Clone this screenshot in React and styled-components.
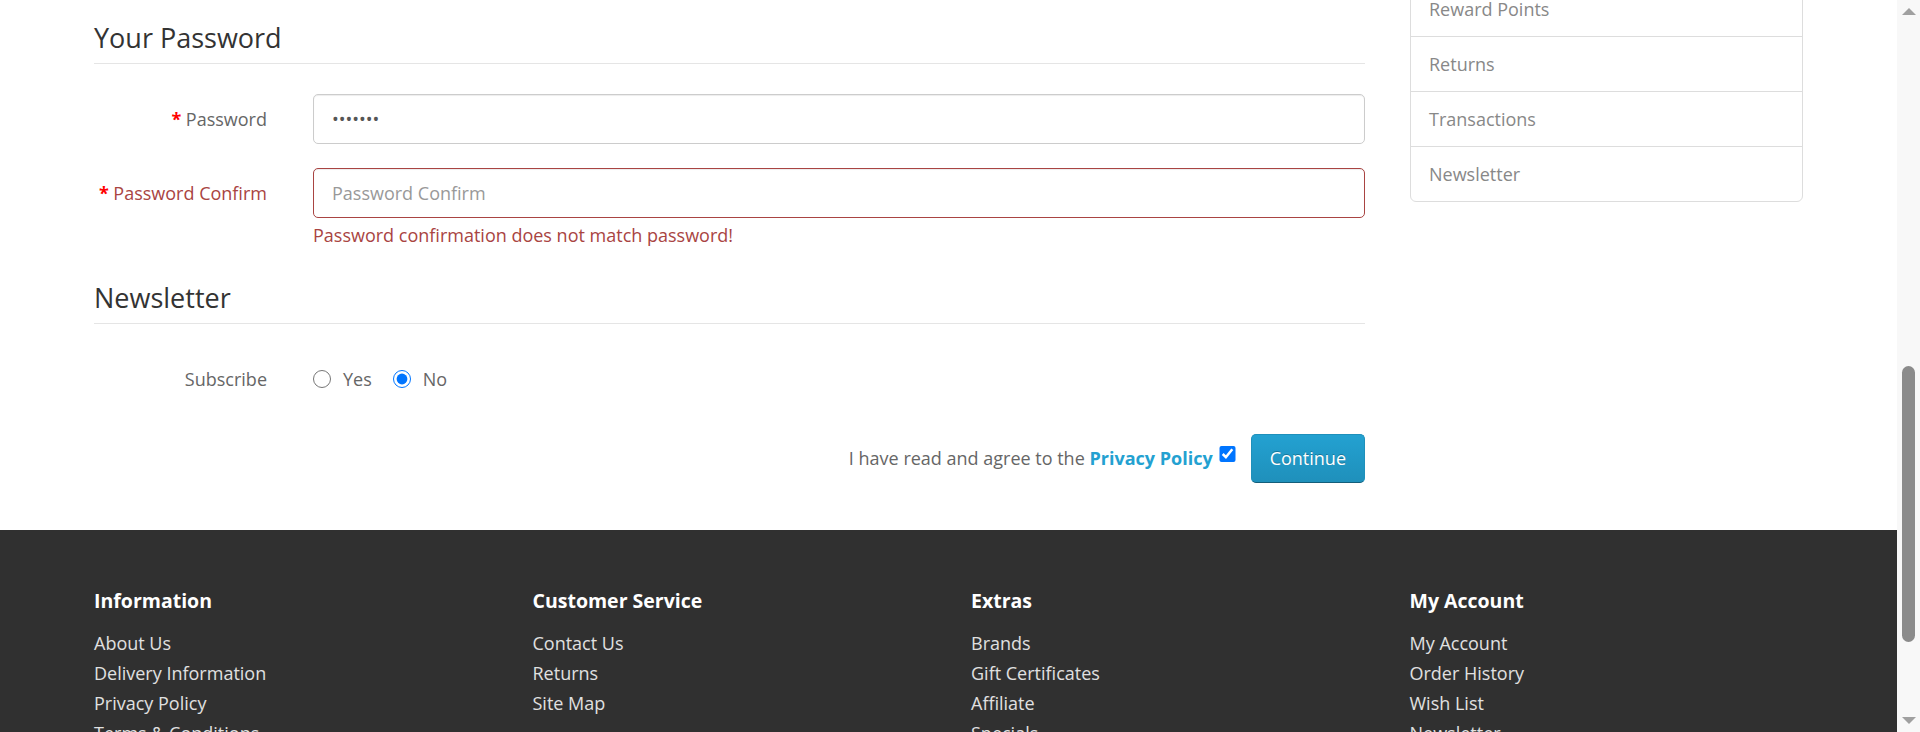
import React, { useLayoutEffect, useRef, useState } from 'react';
import styled, { createGlobalStyle } from 'styled-components';
import { Home, Phone, User, Heart, ShoppingCart, Share, Search } from 'lucide-react';

const GlobalStyle = createGlobalStyle`
	* { box-sizing: border-box; }
	html, body { margin: 0; padding: 0; height: 100%; overflow: hidden; }
	body {
		font-family: 'Open Sans', 'Liberation Sans', sans-serif;
		font-size: 18px;
		color: #666;
		background: #fff;
	}
	#root { height: 100%; }
	a { text-decoration: none; }
`;

const Screen = styled.div`
	display: flex;
	height: 732px;
	overflow: hidden;
	background: #fff;
`;

const Viewport = styled.div`
	position: relative;
	flex: 1;
	height: 100%;
	overflow-y: scroll;
	overflow-x: hidden;
	scrollbar-width: none;

	&::-webkit-scrollbar {
		display: none;
	}
`;

/* drawn window scrollbar */
const ScrollRail = styled.div`
	width: 23px;
	flex: none;
	display: flex;
	flex-direction: column;
	background: #f8f8f8;
`;

const RailArrow = styled.div`
	height: 23px;
	flex: none;
	display: flex;
	align-items: center;
	justify-content: center;

	&::after {
		content: '';
		border-left: 7px solid transparent;
		border-right: 7px solid transparent;
		${(p) => (p.$down ? 'border-top: 7px solid #a0a0a0;' : 'border-bottom: 7px solid #a0a0a0;')}
	}
`;

const RailTrack = styled.div`
	flex: 1;
	padding: 0 5px;
`;

const RailThumb = styled.div`
	width: 13px;
	border-radius: 7px;
	background: #8b8b8b;
`;

const Container = styled.div`
	width: 1709px;
	margin: 0 auto;
`;

/* ---------- header (above the fold) ---------- */

const TopBar = styled.nav`
	height: 50px;
	background: #eee;
	border-bottom: 1px solid #e2e2e2;
	font-size: 14px;
	color: #888;
`;

const TopBarInner = styled(Container)`
	height: 100%;
	display: flex;
	align-items: center;
	justify-content: space-between;
`;

const TopLinks = styled.ul`
	display: flex;
	gap: 18px;
	margin: 0;
	padding: 0;
	list-style: none;

	li {
		display: flex;
		align-items: center;
		gap: 5px;
	}
`;

const SiteHeader = styled.header`
	padding: 40px 0;
`;

const HeaderInner = styled(Container)`
	height: 60px;
	display: grid;
	grid-template-columns: 393px 1fr 393px;
	gap: 45px;
	align-items: center;
`;

const Logo = styled.div`
	font-size: 36px;
	font-weight: 700;
	color: #23a1d1;
`;

const SearchBox = styled.div`
	display: flex;
	height: 50px;
	border: 1px solid #ccc;
	border-radius: 5px;
	overflow: hidden;
`;

const SearchInput = styled.input`
	flex: 1;
	border: 0;
	padding: 0 18px;
	font: inherit;
	color: #555;
	&::placeholder { color: #999; }
`;

const SearchButton = styled.button`
	width: 60px;
	border: 0;
	border-left: 1px solid #ccc;
	background: #eee;
	display: flex;
	align-items: center;
	justify-content: center;
	color: #666;
`;

const CartButton = styled.button`
	height: 50px;
	border: 0;
	border-radius: 5px;
	background: #363636;
	color: #fff;
	font: inherit;
	font-size: 16px;
	display: flex;
	align-items: center;
	justify-content: center;
	gap: 8px;
`;

const Menu = styled(Container)`
	height: 60px;
	margin-bottom: 40px;
	display: flex;
	align-items: center;
	gap: 30px;
	padding: 0 18px;
	border-radius: 5px;
	background: linear-gradient(to bottom, #23a1d1, #1f90bb);
	color: #fff;
	font-size: 17px;
`;

const Breadcrumb = styled(Container)`
	display: flex;
	align-items: center;
	gap: 12px;
	margin-bottom: 50px;
	padding: 13px 18px;
	line-height: 28px;
	border: 1px solid #ddd;
	border-radius: 5px;
	background: #f5f5f5;
	color: #23a1d1;

	span { color: #ccc; }
`;

/* ---------- main area ---------- */

const Row = styled(Container)`
	display: grid;
	grid-template-columns: 1271px 393px;
	column-gap: 45px;
	align-items: start;
`;

const Content = styled.div``;

const PageTitle = styled.h1`
	margin: 25px 0 18px;
	font-size: 33px;
	font-weight: 400;
	line-height: 45px;
	color: #444;
`;

const Intro = styled.p`
	margin: 0 0 40px;
	line-height: 27px;

	a { color: #23a1d1; }
`;

const Fieldset = styled.div`
	padding-bottom: 5px;
`;

const Legend = styled.h2`
	margin: 0 0 30px;
	padding-bottom: 5px;
	border-bottom: 1px solid #e5e5e5;
	font-size: 27px;
	font-weight: 400;
	line-height: 40px;
	color: #333;
`;

const FormRow = styled.div`
	display: grid;
	grid-template-columns: 173px 1fr;
	column-gap: 46px;
	margin-bottom: 24px;
`;

const Label = styled.label`
	text-align: right;
	line-height: 50px;
	white-space: nowrap;
	color: ${(p) => (p.$error ? '#a94442' : '#666')};

	${(p) =>
		p.$required &&
		`&::before {
			content: '* ';
			color: #f00;
			font-weight: 700;
		}`}
`;

const TextInput = styled.input`
	display: block;
	width: 100%;
	height: 50px;
	padding: 0 18px;
	border: 1px solid ${(p) => (p.$error ? '#a94442' : '#ccc')};
	border-radius: 5px;
	box-shadow: inset 0 1px 1px rgba(0, 0, 0, 0.075);
	font: inherit;
	color: #555;
	background: #fff;
	outline: none;

	&::placeholder { color: #999; }
`;

const Feedback = styled.div`
	margin-top: 4px;
	line-height: 27px;
	color: #a94442;
`;

const RadioGroup = styled.div`
	display: flex;
	align-items: center;
	height: 50px;
	gap: 21px;
`;

const RadioLabel = styled.label`
	display: flex;
	align-items: center;
	gap: 12px;
	line-height: 27px;

	input {
		width: 18px;
		height: 18px;
		margin: 0;
	}
`;

const Actions = styled.div`
	display: flex;
	justify-content: flex-end;
	align-items: center;
	margin-top: 1px;
	padding-bottom: 47px;
	line-height: 27px;

	a {
		color: #23a1d1;
		font-weight: 700;
	}
`;

const AgreeBox = styled.input`
	width: 17px;
	height: 16px;
	margin: 0 0 10px 6px;
`;

const PrimaryButton = styled.button`
	height: 49px;
	margin-left: 15px;
	padding: 0 18px;
	border: 1px solid #1f90bb;
	border-bottom-color: #145e7a;
	border-radius: 5px;
	background-color: #229ac8;
	background-image: linear-gradient(to bottom, #23a1d1, #1f90bb);
	color: #fff;
	font: inherit;
	text-shadow: 0 -1px 0 rgba(0, 0, 0, 0.25);
	cursor: pointer;
`;

/* ---------- sidebar ---------- */

const ListGroup = styled.div`
	border: 1px solid #ddd;
	border-radius: 6px;
	overflow: hidden;
`;

const ListItem = styled.a`
	display: block;
	padding: 13px 18px;
	line-height: 28px;
	color: #888;

	& + & {
		border-top: 1px solid #ddd;
	}
`;

/* ---------- footer ---------- */

const Footer = styled.footer`
	padding: 59px 0 80px;
	background: #303030;
	color: #ddd;
`;

const FooterGrid = styled(Container)`
	display: grid;
	grid-template-columns: repeat(4, 1fr);
	column-gap: 45px;
`;

const FooterTitle = styled.h5`
	margin: 0 0 15px;
	font-size: 19.5px;
	font-weight: 700;
	line-height: 24px;
	color: #fff;
`;

const FooterList = styled.ul`
	margin: 0;
	padding: 0;
	list-style: none;

	li { line-height: 30px; }
	a { color: #e0e0e0; }
`;

const FooterRule = styled(Container)`
	margin: 27px auto;
	border-top: 1px solid #515151;
`;

const Copyright = styled(Container)`
	line-height: 27px;
	color: #ccc;
`;

const accountLinks = [
	'Login',
	'Register',
	'Forgotten Password',
	'My Account',
	'Address Book',
	'Wish List',
	'Order History',
	'Downloads',
	'Recurring payments',
	'Reward Points',
	'Returns',
	'Transactions',
	'Newsletter'
];

const footerColumns = [
	{ title: 'Information', links: ['About Us', 'Delivery Information', 'Privacy Policy', 'Terms & Conditions'] },
	{ title: 'Customer Service', links: ['Contact Us', 'Returns', 'Site Map'] },
	{ title: 'Extras', links: ['Brands', 'Gift Certificates', 'Affiliate', 'Specials'] },
	{ title: 'My Account', links: ['My Account', 'Order History', 'Wish List', 'Newsletter'] }
];

const menuItems = ['Desktops', 'Laptops & Notebooks', 'Components', 'Tablets', 'Software', 'Phones & PDAs', 'Cameras', 'MP3 Players'];

const ARROW = 23;

export default function App() {
	const viewportRef = useRef(null);
	const anchorRef = useRef(null);
	const [thumb, setThumb] = useState({ top: 343, height: 276 });

	useLayoutEffect(() => {
		const place = () => {
			const v = viewportRef.current;
			if (!v || !anchorRef.current) return;
			// keep the "Your Password" block 18px below the top of the view
			v.scrollTop = anchorRef.current.offsetTop - 18;

			const track = v.clientHeight - ARROW * 2;
			const height = Math.max(20, (track * v.clientHeight) / v.scrollHeight);
			const range = v.scrollHeight - v.clientHeight;
			const top = range > 0 ? (v.scrollTop / range) * (track - height) : 0;
			setThumb({ top, height });
		};
		place();
		if (document.fonts && document.fonts.ready) document.fonts.ready.then(place);
	}, []);

	return (
		<>
			<GlobalStyle />
			<Screen>
				<Viewport ref={viewportRef}>
					<TopBar>
						<TopBarInner>
							<span>$ Currency</span>
							<TopLinks>
								<li><Phone size={14} /> 123456789</li>
								<li><User size={14} /> My Account</li>
								<li><Heart size={14} /> Wish List (0)</li>
								<li><ShoppingCart size={14} /> Shopping Cart</li>
								<li><Share size={14} /> Checkout</li>
							</TopLinks>
						</TopBarInner>
					</TopBar>

					<SiteHeader>
						<HeaderInner>
							<Logo>Your Store</Logo>
							<SearchBox>
								<SearchInput placeholder="Search" />
								<SearchButton><Search size={18} /></SearchButton>
							</SearchBox>
							<CartButton><ShoppingCart size={16} /> 0 item(s) - $0.00</CartButton>
						</HeaderInner>
					</SiteHeader>

					<Menu as="nav">
						{menuItems.map((m) => (
							<span key={m}>{m}</span>
						))}
					</Menu>

					<Breadcrumb as="ul">
						<Home size={16} /> <span>›</span> Account <span>›</span> Register
					</Breadcrumb>

					<Row>
						<Content>
							<PageTitle>Register Account</PageTitle>
							<Intro>
								If you already have an account with us, please login at the <a href="#">login page</a>.
							</Intro>

							<Fieldset>
								<Legend>Your Personal Details</Legend>
								{['First Name', 'Last Name', 'E-Mail', 'Telephone'].map((f) => (
									<FormRow key={f}>
										<Label $required>{f}</Label>
										<TextInput placeholder={f} />
									</FormRow>
								))}
							</Fieldset>

							<Fieldset ref={anchorRef}>
								<Legend>Your Password</Legend>
								<FormRow>
									<Label $required>Password</Label>
									<TextInput type="password" defaultValue="1234567" placeholder="Password" />
								</FormRow>
								<FormRow>
									<Label $required $error>Password Confirm</Label>
									<div>
										<TextInput type="password" placeholder="Password Confirm" $error />
										<Feedback>Password confirmation does not match password!</Feedback>
									</div>
								</FormRow>
							</Fieldset>

							<Fieldset>
								<Legend>Newsletter</Legend>
								<FormRow>
									<Label>Subscribe</Label>
									<RadioGroup>
										<RadioLabel>
											<input type="radio" name="newsletter" value="1" /> Yes
										</RadioLabel>
										<RadioLabel>
											<input type="radio" name="newsletter" value="0" defaultChecked /> No
										</RadioLabel>
									</RadioGroup>
								</FormRow>
							</Fieldset>

							<Actions>
								<span>
									I have read and agree to the <a href="#">Privacy Policy</a>
								</span>
								<AgreeBox type="checkbox" defaultChecked />
								<PrimaryButton>Continue</PrimaryButton>
							</Actions>
						</Content>

						<aside>
							<ListGroup>
								{accountLinks.map((l) => (
									<ListItem key={l} href="#">
										{l}
									</ListItem>
								))}
							</ListGroup>
						</aside>
					</Row>

					<Footer>
						<FooterGrid>
							{footerColumns.map((col) => (
								<div key={col.title}>
									<FooterTitle>{col.title}</FooterTitle>
									<FooterList>
										{col.links.map((l) => (
											<li key={l}>
												<a href="#">{l}</a>
											</li>
										))}
									</FooterList>
								</div>
							))}
						</FooterGrid>
						<FooterRule />
						<Copyright>Powered By OpenCart Your Store © 2025</Copyright>
					</Footer>
				</Viewport>

				<ScrollRail>
					<RailArrow />
					<RailTrack>
						<RailThumb style={{ marginTop: thumb.top, height: thumb.height }} />
					</RailTrack>
					<RailArrow $down />
				</ScrollRail>
			</Screen>
		</>
	);
}
